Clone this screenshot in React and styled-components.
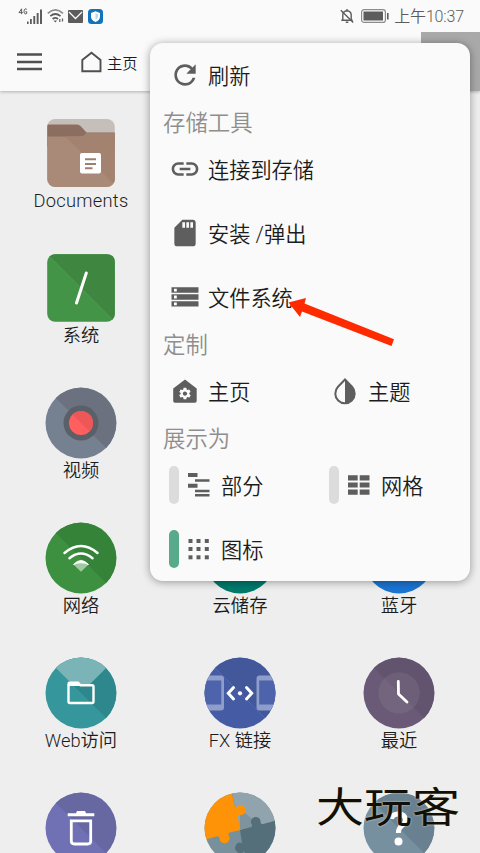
import React from "react";
import styled, { createGlobalStyle } from "styled-components";
import { MdRefresh, MdLink, MdSdCard, MdSettings } from "react-icons/md";

const GlobalStyle = createGlobalStyle`
    body {
        margin: 0;
        background: #eee;
        font-family: Roboto, "Noto Sans CJK SC", sans-serif;
        font-weight: 350;
        color: #1c1c1c;
    }
    svg {
        display: block;
        flex: none;
    }
`

const Screen = styled.div`
    position: relative;
    width: 480px;
    height: 853px;
    overflow: hidden;
    background: #eee;
`

const Header = styled.header`
    height: 91px;
    background: #fafafa;
    box-shadow: 0 1px 3px rgba(0, 0, 0, 0.25);
`

const StatusBar = styled.div`
    display: flex;
    align-items: center;
    height: 32px;
    padding: 0 16px 0 18px;
    box-sizing: border-box;
    color: #5c5c5c;
`

const Clock = styled.span`
    margin-left: 5px;
    padding-top: 1px;
    font-size: 16px;
    line-height: 32px;
    letter-spacing: -0.15px;
    white-space: nowrap;
`

const Gap = styled.div`
    flex: ${props => props.$size ? `0 0 ${props.$size}px` : "1"};
`

const Toolbar = styled.div`
    display: flex;
    align-items: center;
    height: 59px;
    padding-left: 17px;
`

const Crumb = styled.div`
    display: flex;
    align-items: center;
    gap: 5px;
    margin-left: 38px;
    font-size: 15.3px;
`

const MoreButton = styled.div`
    width: 59px;
    height: 59px;
    margin-left: auto;
    background: #a9a9a9;
`

const Grid = styled.main`
    display: grid;
    grid-template-columns: repeat(3, 159px);
    grid-auto-rows: 135px;
    padding: 25.5px 0 0 1.5px;
`

const Item = styled.div`
    display: flex;
    flex-direction: column;
    align-items: center;
    grid-column: ${props => props.$col || "auto"};
`

const Label = styled.span`
    font-size: 18.3px;
    line-height: 24px;
    letter-spacing: ${props => props.$spacing || "0"};
    white-space: nowrap;
`

const Menu = styled.div`
    position: absolute;
    top: 43px;
    left: 150px;
    width: 320px;
    height: 538px;
    border-radius: 13px;
    background: #fafafa;
    box-shadow: 0 1px 8px rgba(0, 0, 0, 0.38);
`

const MenuHeading = styled.div`
    height: 30px;
    padding-left: 13px;
    font-size: 22.4px;
    line-height: 33px;
    color: #8e8e8e;
`

const MenuRow = styled.div`
    display: grid;
    grid-template-columns: 160px 160px;
    height: 64px;
`

const MenuItem = styled.div`
    display: flex;
    align-items: center;
    padding-left: 19px;
    font-size: 21.2px;
    white-space: nowrap;
    color: #1c1c1c;

    svg {
        color: #5e5e5e;
        margin-right: 7px;
    }
`

const MenuText = styled.span`
    padding-bottom: 2px;
`

const ViewItem = styled(MenuItem)`
    svg {
        margin: 0 6px 0 4px;
    }
`

const Marker = styled.span`
    width: 10px;
    height: 38px;
    border-radius: 5px;
    background: ${props => props.$active ? "#57ab8b" : "#dcdcdc"};
`

const Arrow = styled.svg`
    position: absolute;
    left: 286px;
    top: 294px;
`

const Watermark = styled.div`
    position: absolute;
    left: 316px;
    top: 782px;
    font-size: 48px;
    line-height: 52px;
    font-weight: 400;
    color: #111008;
    white-space: nowrap;
    transform: scaleY(0.86);
    text-shadow: 0 0 2px #f3e9cf;
`

function SignalIcon() {
    return (
        <svg width="25" height="18" viewBox="0 0 25 18" fill="#5c5c5c">
            <g fill="none" stroke="#5c5c5c" strokeWidth="1">
                <path d="M3.6 7.2V1.8L1 5.6H4.8" />
                <path d="M8.8 2.4C7.8 1.2 6 1.8 6 4.4S7.6 7.4 8.7 6.5V4.7H7.4" />
            </g>
            <path d="M9 14.500h1.600V17H9zM12 12h1.800v5H12zM15.300 9h1.900v8h-1.900zM18.700 6h1.900v11h-1.900zM22 2.500h2v14.500H22z" />
        </svg>
    )
}

function StatusWifi() {
    return (
        <svg width="17" height="16" viewBox="0 0 17 16" fill="none" stroke="#5c5c5c" strokeWidth="1.700">
            <path d="M.8 5.300Q8.300-1.500 16 5.300" stroke="#8c8c8c" />
            <path d="M3.300 8.200Q8.300 3.800 13.500 8.200" />
            <path d="M5.600 11Q8.300 8.800 11 11" />
            <path d="M6.500 12.500h3.600L8.300 14.600z" fill="#5c5c5c" stroke="none" />
            <path d="M12.800 11v3M15.500 10.500v3" strokeWidth="1.200" />
        </svg>
    )
}

function MailIcon() {
    return (
        <svg width="15" height="13" viewBox="0 0 15 13">
            <rect width="15" height="13" rx="1" fill="#5c5c5c" />
            <path d="M1 2L7.500 8.500 14 2" fill="none" stroke="#fafafa" strokeWidth="1.300" />
        </svg>
    )
}

function ShieldIcon() {
    return (
        <svg width="15" height="15" viewBox="0 0 15 15">
            <rect width="15" height="15" rx="3.500" fill="#1273bd" />
            <path d="M7.500 2.300L12 4v3.500q0 3.500-4.500 5.500Q3 11 3 7.500V4z" fill="#fff" />
            <path d="M7.500 4.300L10 5.300v2.200q0 2-2.500 3.300z" fill="#b9d9ee" />
        </svg>
    )
}

function MuteIcon() {
    return (
        <svg width="14" height="16" viewBox="0 0 14 16" fill="none" stroke="#5c5c5c" strokeWidth="1.400">
            <path d="M2.800 12V6.600Q3 3.200 7 2.700 11 3.200 11.200 6.600V12M1.300 12.200H12.700M7 1V2.700M5.800 14.300H8.300" />
            <path d="M.8 2.300L13.200 14.500" />
        </svg>
    )
}

function BatteryIcon() {
    return (
        <svg width="28" height="14" viewBox="0 0 28 14">
            <rect x=".6" y=".6" width="23.800" height="12.800" rx="2.500" fill="none" stroke="#8b8b8b" strokeWidth="1.200" />
            <rect x="2.500" y="2.500" width="19.500" height="9" fill="#5c5c5c" />
            <path d="M26 4h1.600v6.500H26z" fill="#5c5c5c" />
        </svg>
    )
}

// two tone disc that most of the launcher icons sit on
function Disc({ color, shade, children }) {
    return (
        <svg width="72" height="72" viewBox="0 0 72 72">
            <circle cx="36" cy="36" r="35.500" fill={color} />
            {shade && <path d="M10.900 10.900A35.500 35.500 0 0 1 61.100 61.100Z" fill={shade} />}
            {children}
        </svg>
    )
}

function DocumentsIcon() {
    return (
        <svg width="72" height="72" viewBox="0 0 72 72">
            <defs>
                <clipPath id="folder"><rect x="2.200" y="2" width="67.600" height="68" rx="8" /></clipPath>
            </defs>
            <g clipPath="url(#folder)">
                <path d="M0 0h72v72H0z" fill="#c6beb9" />
                <path d="M0 7.500H32Q34 7.500 35.500 9L41.500 15.500H72V30H0z" fill="#8c6e60" />
                <path d="M0 19.500H36Q38.500 19.500 40 17.500L41 16.500H72V72H0z" fill="#a98a78" />
                <path d="M20 19.500H36Q38.500 19.500 40 17.500L41 16.500H72V70z" fill="#a38270" />
            </g>
            <rect x="35" y="36" width="21" height="20.500" rx="2" fill="#fff" />
            <path d="M40 42.200H51M40 47H51M40 51.300H47.500" stroke="#a07f6e" strokeWidth="2" />
        </svg>
    )
}

function SystemIcon() {
    return (
        <svg width="72" height="72" viewBox="0 0 72 72">
            <rect x="2.200" y="2.200" width="67.600" height="67.600" rx="8" fill="#439446" />
            <path d="M4.500 4.500Q7 2.200 10 2.200H62Q69.800 2.200 69.800 10V62Q69.800 65 67.500 67.500Z" fill="#3f8741" />
            <path d="M4.500 4.500L67.500 67.500" stroke="#57a159" strokeWidth=".6" />
            <path d="M41.300 21L31.500 51" stroke="#fff" strokeWidth="3" strokeLinecap="round" />
        </svg>
    )
}

function VideoIcon() {
    return (
        <Disc color="#758090" shade="#6c7180">
            <circle cx="36" cy="36" r="17.500" fill="#5a6068" />
            <circle cx="36" cy="36" r="12" fill="#ff5f5f" />
            <path d="M27.500 27.500A12 12 0 0 1 44.500 44.500Z" fill="#ee5757" />
        </Disc>
    )
}

function NetworkIcon() {
    return (
        <Disc color="#3c903f" shade="#358338">
            <g fill="none" stroke="#fff" strokeWidth="2.500" strokeLinecap="round">
                <path d="M19.500 31Q36 17 52.500 31" />
                <path d="M24.500 36.300Q36 26.800 47.500 36.300" />
            </g>
            <path d="M28.500 42.500Q36 34.500 43.500 42.500L36 49.800Z" fill="#a0cba2" />
            <path d="M28.500 42.500Q36 34.500 43.500 42.500Q36 39 28.500 42.500Z" fill="#fff" stroke="#fff" strokeWidth=".8" />
        </Disc>
    )
}

function WebIcon() {
    return (
        <Disc color="#35979b" shade="#2e878c">
            <path d="M10.900 10.900A35.500 35.500 0 0 1 61.100 10.900L43.500 28.500H28.500Z" fill="#7ab4b6" />
            <path d="M23.500 43.500V27Q23.500 25.800 24.700 25.800H33L35.500 28.300H47Q48.500 28.300 48.500 29.800V44.500Q48.500 46 47 46H25Q23.500 46 23.500 44.500Z" fill="none" stroke="#fff" strokeWidth="2.400" />
            <path d="M24 26H33L35.500 29H24z" fill="#fff" />
        </Disc>
    )
}

function LinkIcon() {
    return (
        <Disc color="#455ca5" shade="#43589a">
            <clipPath id="disc"><circle cx="36" cy="36" r="35.500" /></clipPath>
            <g clipPath="url(#disc)">
                <path d="M-4 18.500H17Q20 18.500 20 21.500V50.500Q20 53.500 17 53.500H-4zM76 18.500H55.500Q52.500 18.500 52.500 21.500V50.500Q52.500 53.500 55.500 53.500H76z" fill="#8f9dca" />
                <path d="M-4 23.500H17.300V47.500H-4zM76 23.500H55.200V47.500H76z" fill="#4d63ac" />
            </g>
            <path d="M10.900 10.900L61.100 61.100" stroke="#5d72b4" strokeWidth=".6" />
            <path d="M29.500 30.500L24.300 36.300 29.500 42M42.500 30.500L47.700 36.300 42.500 42" fill="none" stroke="#fff" strokeWidth="3" strokeLinecap="round" />
            <circle cx="36" cy="36.300" r="2.100" fill="#fff" />
        </Disc>
    )
}

function RecentIcon() {
    return (
        <Disc color="#6a5a78" shade="#62536f">
            <circle cx="36" cy="36" r="20.500" fill="#74657f" />
            <path d="M21.500 21.500A20.500 20.500 0 0 1 50.500 50.500Z" fill="#6e5f79" />
            <path d="M35.300 24.500L35.500 37 44 45" fill="none" stroke="#fff" strokeWidth="2.800" strokeLinecap="round" strokeLinejoin="round" />
        </Disc>
    )
}

function TrashIcon() {
    return (
        <Disc color="#7070b5" shade="#6767a2">
            <path d="M22.700 21.300H31L32 19H40L41 21.300H49.300V24.200H22.700z" fill="#fff" />
            <path d="M26.300 28.800H45.700V49Q45.700 52 42.700 52H29.300Q26.300 52 26.300 49Z" fill="none" stroke="#fff" strokeWidth="2.800" />
        </Disc>
    )
}

function AddonsIcon() {
    return (
        <svg width="72" height="72" viewBox="0 0 72 72">
            <clipPath id="puzzle"><circle cx="36" cy="36" r="35.500" /></clipPath>
            <g clipPath="url(#puzzle)">
                <path d="M0 0H72V72H0z" fill="#78909c" />
                <path d="M28 0H72V29L36 38z" fill="#91a3ac" />
                <path d="M36 17L58 35 36 38z" fill="#7f939d" />
                <path d="M36 38L47.500 35Q48.500 33.500 47.500 32A4.800 4.800 0 1 1 56.500 30Q56.500 32 58.500 32.300L72 28.500V72H41L40.500 59A5.200 5.200 0 1 1 38 51Z" fill="#546e7a" />
                <path d="M0 0H27.500L31 15Q32.500 15.800 33.500 14.200A5 5 0 1 1 37 23Q33.500 23 33.800 25.500L36.500 38L25.500 40.500Q23.500 41.500 24.700 43.500A5 5 0 1 1 15.500 46.500Q15.500 44 13 44.300L0 48z" fill="#ff9308" />
            </g>
        </svg>
    )
}

function HelpIcon() {
    return (
        <Disc color="#7790a0" shade="#698090">
            <path d="M28.500 27Q29 22 35.500 22T42.500 28Q42.500 31 39 33.500 35.500 36 35.300 41" fill="none" stroke="#fff" strokeWidth="5" />
            <circle cx="35.500" cy="49.500" r="4" fill="#fff" />
        </Disc>
    )
}

function StorageIcon() {
    return (
        <svg width="32" height="32" viewBox="0 0 32 32">
            <path d="M2.500 6.300h27v5.400h-27zM2.500 13.300h27v5.400h-27zM2.500 20.200h27v5.400h-27z" fill="currentColor" />
            <path d="M5 7.700h2.800v2.800H5zM5 14.600h2.800v2.800H5zM5 21.500h2.800v2.800H5z" fill="#fff" />
        </svg>
    )
}

function HomeSettingsIcon() {
    return (
        <svg width="32" height="32" viewBox="0 0 32 32">
            <path d="M16 4.500L27.700 13.500V26Q27.700 27.800 25.900 27.800H6Q4.200 27.800 4.200 26V13.500Z" fill="currentColor" />
            <MdSettings x="8.700" y="11.300" size="14.500" style={{ color: "#fafafa" }} />
        </svg>
    )
}

function ThemeIcon() {
    return (
        <svg width="32" height="32" viewBox="0 0 32 32">
            <path d="M16 4.500L23 11.800A9.700 9.700 0 1 1 9 11.800Z" fill="none" stroke="currentColor" strokeWidth="2" />
            <path d="M16 4.500L23 11.800A9.700 9.700 0 0 1 16 28.300Z" fill="currentColor" />
        </svg>
    )
}

function SectionsIcon() {
    return (
        <svg width="32" height="32" viewBox="0 0 32 32" fill="currentColor">
            <path d="M5 4h9.500v4H5zM12 10.200h14.500v2.500H12zM5 14.700h9.500v4H5zM12 20.700h14.500v2.500H12zM12 25h14.500v2.500H12z" />
        </svg>
    )
}

function TableIcon() {
    return (
        <svg width="32" height="32" viewBox="0 0 32 32" fill="currentColor">
            <path d="M5 6.300h9.700v5.200H5zM16.700 6.300h9.800v5.200h-9.800zM5 13.400h9.700v5.200H5zM16.700 13.400h9.800v5.200h-9.800zM5 20.500h9.700v5.200H5zM16.700 20.500h9.800v5.200h-9.800z" />
        </svg>
    )
}

function DotsIcon() {
    const steps = [5.500, 13.500, 21.800];
    return (
        <svg width="32" height="32" viewBox="0 0 32 32" fill="currentColor">
            {steps.map(y => steps.map(x => <rect key={`${x}-${y}`} x={x} y={y + 0.5} width="4" height="4" />))}
        </svg>
    )
}

const items = [
    { name: "Documents", icon: <DocumentsIcon />, col: 1, spacing: "0.25px" },
    { name: "系统", icon: <SystemIcon />, col: 1 },
    { name: "视频", icon: <VideoIcon />, col: 1 },
    { name: "网络", icon: <NetworkIcon />, col: 1 },
    { name: "云储存", icon: <Disc color="#00796b" /> },
    { name: "蓝牙", icon: <Disc color="#1b74d0" /> },
    { name: "Web访问", icon: <WebIcon /> },
    { name: "FX 链接", icon: <LinkIcon /> },
    { name: "最近", icon: <RecentIcon /> },
    { name: "", icon: <TrashIcon /> },
    { name: "", icon: <AddonsIcon /> },
    { name: "", icon: <HelpIcon /> },
];

export default function App() {
    return (
        <Screen>
            <GlobalStyle />
            <Header>
                <StatusBar>
                    <SignalIcon />
                    <Gap $size={4} />
                    <StatusWifi />
                    <Gap $size={4} />
                    <MailIcon />
                    <Gap $size={5} />
                    <ShieldIcon />
                    <Gap />
                    <MuteIcon />
                    <Gap $size={7} />
                    <BatteryIcon />
                    <Clock>上午10:37</Clock>
                </StatusBar>
                <Toolbar>
                    <svg width="25" height="18" viewBox="0 0 25 18">
                        <path d="M0 1.500H25M0 9H25M0 16H25" stroke="#4f4f4f" strokeWidth="2.500" />
                    </svg>
                    <Crumb>
                        <svg width="22" height="22" viewBox="0 0 22 22">
                            <path d="M2.300 20.300V9L11.500 1.800 20.500 9V20.300Z" fill="none" stroke="#4f4f4f" strokeWidth="1.900" />
                        </svg>
                        主页
                    </Crumb>
                    <MoreButton />
                </Toolbar>
            </Header>
            <Grid>
                {items.map((item, i) => (
                    <Item key={i} $col={item.col}>
                        {item.icon}
                        <Label $spacing={item.spacing}>{item.name}</Label>
                    </Item>
                ))}
            </Grid>
            <Menu>
                <MenuRow>
                    <MenuItem><MdRefresh size={32} /><MenuText>刷新</MenuText></MenuItem>
                </MenuRow>
                <MenuHeading>存储工具</MenuHeading>
                <MenuRow>
                    <MenuItem><MdLink size={32} /><MenuText>连接到存储</MenuText></MenuItem>
                </MenuRow>
                <MenuRow>
                    <MenuItem><MdSdCard size={32} /><MenuText>安装 /弹出</MenuText></MenuItem>
                </MenuRow>
                <MenuRow>
                    <MenuItem><StorageIcon /><MenuText>文件系统</MenuText></MenuItem>
                </MenuRow>
                <MenuHeading>定制</MenuHeading>
                <MenuRow>
                    <MenuItem><HomeSettingsIcon /><MenuText>主页</MenuText></MenuItem>
                    <MenuItem><ThemeIcon /><MenuText>主题</MenuText></MenuItem>
                </MenuRow>
                <MenuHeading>展示为</MenuHeading>
                <MenuRow>
                    <ViewItem><Marker /><SectionsIcon /><MenuText>部分</MenuText></ViewItem>
                    <ViewItem><Marker /><TableIcon /><MenuText>网格</MenuText></ViewItem>
                </MenuRow>
                <MenuRow>
                    <ViewItem><Marker $active /><DotsIcon /><MenuText>图标</MenuText></ViewItem>
                </MenuRow>
            </Menu>
            <Arrow width="110" height="54" viewBox="286 294 110 54">
                <path d="M288.500 302.500L306 298 304.500 303.500 394 339.300 391.500 346 302 311.500 300 317Z" fill="#fe2a00" />
            </Arrow>
            <Watermark>大玩客</Watermark>
        </Screen>
    )
}
